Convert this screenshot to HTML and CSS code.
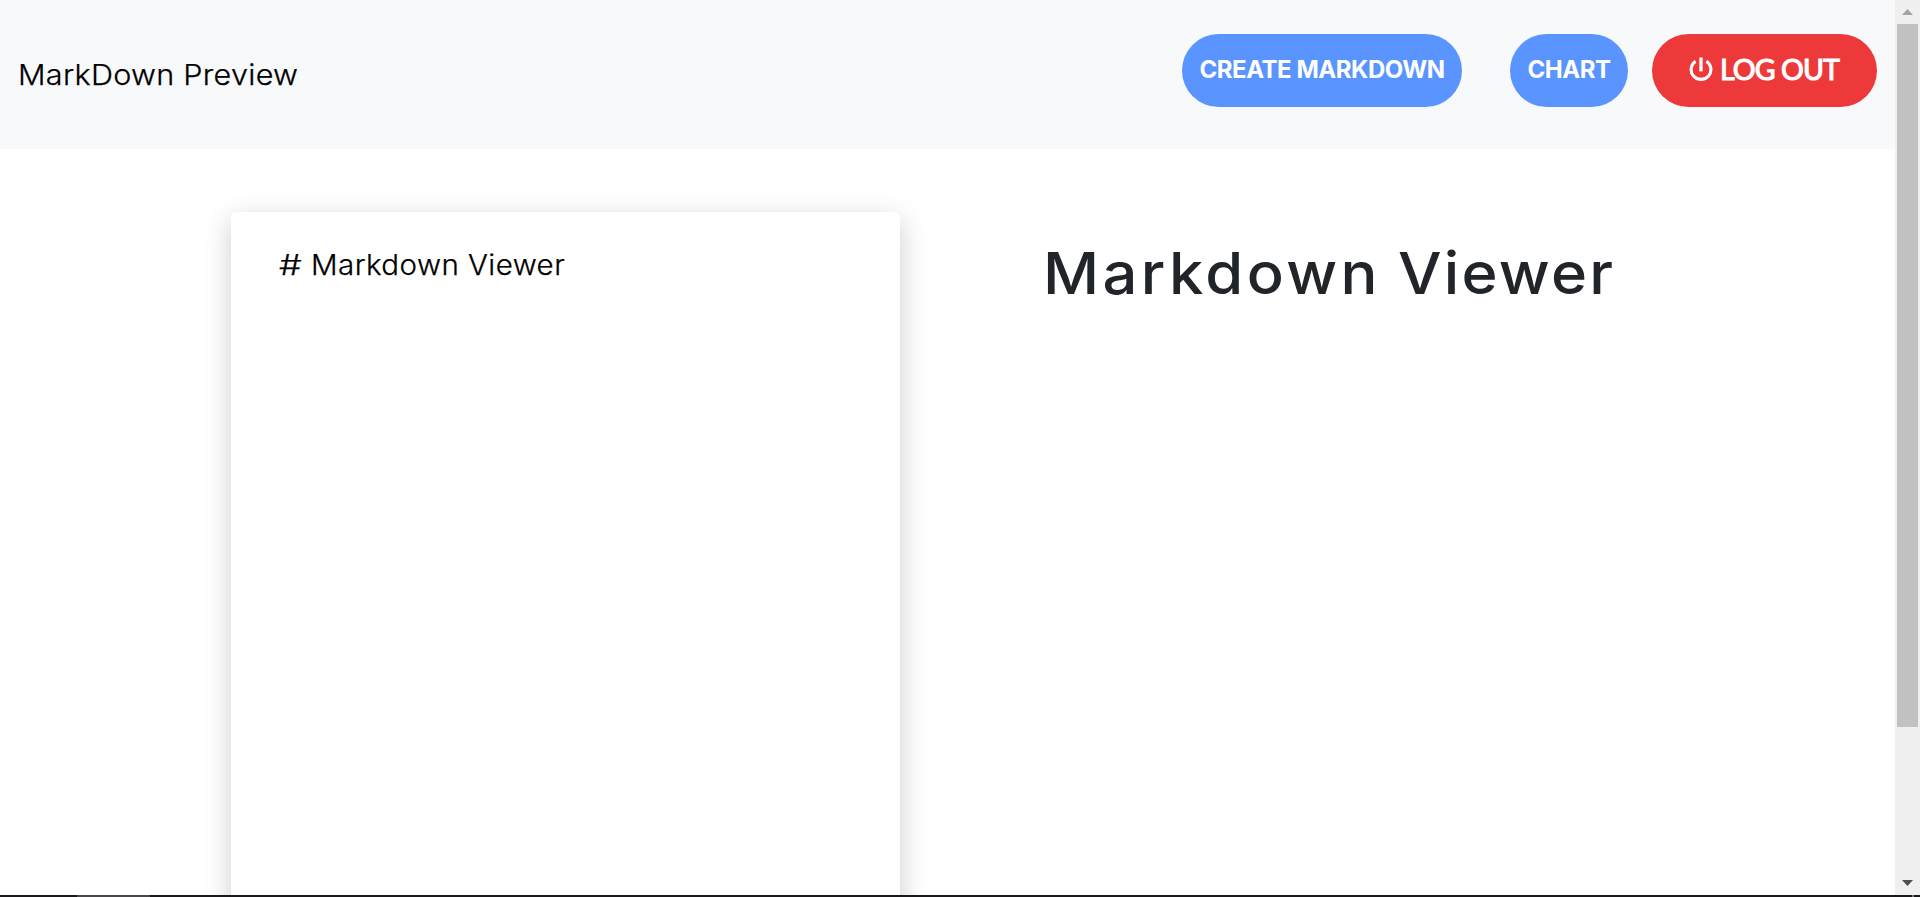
FILE: index.html
```html
<!DOCTYPE html>
<html lang="en">
<head>
<meta charset="utf-8">
<title>MarkDown Preview</title>
<link rel="stylesheet" href="styles.css">
</head>
<body>
<div class="screen">
  <div class="window">
    <div class="page">
      <header class="navbar">
        <a class="brand"><span>MarkDown Preview</span></a>
        <nav class="actions">
          <a class="btn btn-create"><span>CREATE MARKDOWN</span></a>
          <a class="btn btn-chart"><span>CHART</span></a>
          <a class="btn btn-logout">
            <svg class="power" viewBox="0 0 24 24" width="24" height="24" fill="none" stroke="#fff" stroke-width="3.1"><path d="M6.6 4.2A9.9 9.9 0 1 0 17.4 4.2"/><path d="M12 .5V14.4" stroke-width="3.3"/></svg>
            <span>LOG OUT</span>
          </a>
        </nav>
      </header>
      <main class="workspace">
        <section class="editor"><span class="hash">#</span><span class="source">Markdown Viewer</span></section>
        <section class="preview"><h1><span class="first">Markdown</span> <span class="second">Viewer</span></h1></section>
      </main>
    </div>
    <div class="scrollbar">
      <svg class="arrow" viewBox="0 0 11 6" width="11" height="6"><path d="M0 6L5.5 0L11 6Z" fill="#a3a3a3"/></svg>
      <div class="thumb"></div>
      <svg class="arrow down" viewBox="0 0 11 6" width="11" height="6"><path d="M0 0L5.5 6L11 0Z" fill="#505050"/></svg>
    </div>
  </div>
  <footer class="taskbar"><div class="task"></div><div class="tray"></div></footer>
</div>
</body>
</html>
```
FILE: styles.css
```css
* { box-sizing: border-box; }
body { margin: 0; overflow: hidden; font-family: Inter, "Open Sans", sans-serif; background: #fff; }
.screen { display: flex; flex-direction: column; height: 897px; width: 1920px; }
.window { display: flex; height: 895px; overflow: hidden; }
.page { width: 1895px; overflow: hidden; background: #fff; }
.navbar { display: flex; justify-content: space-between; height: 149px; padding: 34px 18px 0; background: #f8f9fb; }
.brand { padding-top: 22px; font-size: 29px; line-height: 38px; font-weight: 300; color: #000; }
.brand span { display: inline-block; transform: scaleX(1.055); transform-origin: 0 50%; letter-spacing: .25px; -webkit-text-stroke: .25px #000; }
.actions { display: flex; align-items: flex-start; }
.btn { display: flex; align-items: center; justify-content: center; height: 73px; padding-bottom: 2px; border-radius: 37px; color: #fff; background: #5a95ff; font-size: 24px; font-weight: 700; white-space: nowrap; }
.btn-create { width: 280px; margin-right: 48px; letter-spacing: -.45px; }
.btn-chart { width: 118px; margin-right: 24px; letter-spacing: -.5px; }
.btn-logout { width: 225px; justify-content: flex-start; padding: 0 0 4px 37px; background: #ed393a; font-family: Lato, sans-serif; font-size: 28.5px; font-weight: 400; letter-spacing: -.9px; -webkit-text-stroke: 1.1px #fff; }
.power { flex: none; margin-right: 7px; }
.workspace { display: flex; padding: 63px 0 0 231px; }
.editor { display: flex; width: 669px; height: 800px; padding: 33px 48px; border-radius: 5px; background: #fff; box-shadow: 0 8px 28px rgba(0, 0, 0, .2); font-size: 28px; line-height: 40px; font-weight: 300; color: #000; -webkit-text-stroke: .25px #000; }
.hash { width: 32px; transform: scaleX(1.28); transform-origin: 0 50%; }
.source { transform: scaleX(1.055); transform-origin: 0 50%; letter-spacing: .4px; white-space: nowrap; }
.preview { padding: 20px 0 0 143px; }
h1 { display: flex; gap: 20px; margin: 0; font-size: 58px; line-height: 82px; font-weight: 500; color: #212529; letter-spacing: 2.1px; white-space: nowrap; }
.first { width: 335px; letter-spacing: 3.2px; transform: scaleX(1.06); transform-origin: 0 50%; }
.second { transform: scaleX(1.06); transform-origin: 0 50%; }
.scrollbar { display: flex; flex-direction: column; align-items: center; width: 25px; padding: 9px 0 9px; background: #f0f0f0; }
.arrow { display: block; flex: none; margin-bottom: 9px; }
.thumb { width: 21px; height: 703px; background: #c1c1c1; }
.down { margin: auto 0 0; }
.taskbar { display: flex; justify-content: space-between; height: 2px; padding: 0 6px 0 77px; background: #1a181a; }
.task { width: 73px; background: #484648; }
.tray { width: 2px; background: #777; }
```
